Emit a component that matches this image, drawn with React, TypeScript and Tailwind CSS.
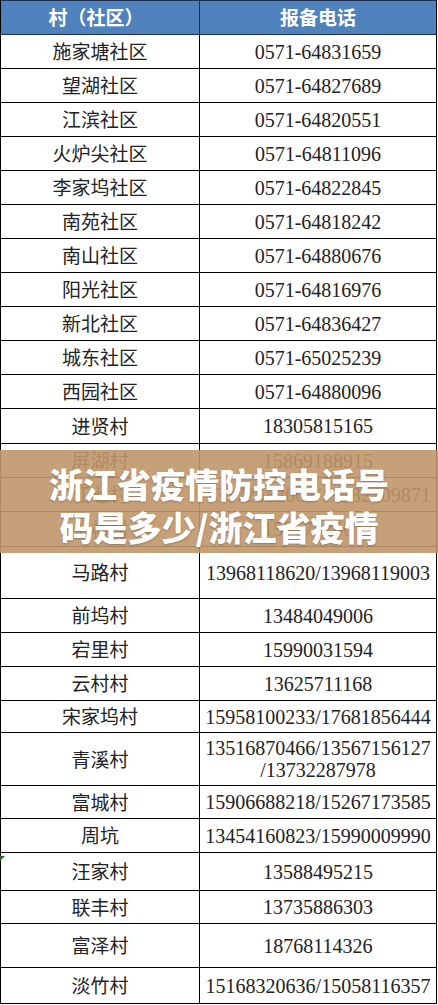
const rows: { name: string; phone: string[]; h: string }[] = [
  { name: "施家塘社区", phone: ["0571-64831659"], h: "h-[34px]" },
  { name: "望湖社区", phone: ["0571-64827689"], h: "h-[34px]" },
  { name: "江滨社区", phone: ["0571-64820551"], h: "h-[34px]" },
  { name: "火炉尖社区", phone: ["0571-64811096"], h: "h-[34px]" },
  { name: "李家坞社区", phone: ["0571-64822845"], h: "h-[34px]" },
  { name: "南苑社区", phone: ["0571-64818242"], h: "h-[34px]" },
  { name: "南山社区", phone: ["0571-64880676"], h: "h-[34px]" },
  { name: "阳光社区", phone: ["0571-64816976"], h: "h-[34px]" },
  { name: "新北社区", phone: ["0571-64836427"], h: "h-[34px]" },
  { name: "城东社区", phone: ["0571-65025239"], h: "h-[34px]" },
  { name: "西园社区", phone: ["0571-64880096"], h: "h-[34px]" },
  { name: "进贤村", phone: ["18305815165"], h: "h-[35px]" },
  { name: "屏湖村", phone: ["15869188915"], h: "h-[34px]" },
  { name: "江七村", phone: ["13372553007/15282109871"], h: "h-[34px]" },
  { name: "上村村", phone: ["15867830013"], h: "h-[35px]" },
  { name: "马路村", phone: ["13968118620/13968119003"], h: "h-[52px]" },
  { name: "前坞村", phone: ["13484049006"], h: "h-[34px]" },
  { name: "宕里村", phone: ["15990031594"], h: "h-[34px]" },
  { name: "云村村", phone: ["13625711168"], h: "h-[34px]" },
  { name: "宋家坞村", phone: ["15958100233/17681856444"], h: "h-[32px]" },
  { name: "青溪村", phone: ["13516870466/13567156127", "/13732287978"], h: "h-[53px]" },
  { name: "富城村", phone: ["15906688218/15267173585"], h: "h-[33px]" },
  { name: "周坑", phone: ["13454160823/15990009990"], h: "h-[34px]" },
  { name: "汪家村", phone: ["13588495215"], h: "h-[38px]" },
  { name: "联丰村", phone: ["13735886303"], h: "h-[33px]" },
  { name: "富泽村", phone: ["18768114326"], h: "h-[44px]" },
  { name: "淡竹村", phone: ["15168320636/15058116357"], h: "h-[36px]" },
];

export default function App() {
  return (
    <div className="relative h-[1005px] w-[438px] overflow-hidden bg-white">
      <div className="w-[437px] border-l border-r border-black">
        {/* header */}
        <div className="flex h-[35px] border-t border-b border-[#1f2f4f] bg-[#4f81bd] font-['Noto_Sans_CJK_SC',sans-serif] text-[19px] font-bold text-white">
          <div className="flex w-[199px] items-center justify-center border-r border-[#1f2f4f] pr-[8px]">
            村（社区）
          </div>
          <div className="flex flex-1 items-center justify-center">报备电话</div>
        </div>

        {rows.map((r) => (
          <div key={r.name} className={`flex border-b border-black ${r.h}`}>
            <div className="flex w-[199px] items-center justify-center border-r border-black font-['Noto_Sans_CJK_SC',sans-serif] text-[19px] text-[#222]">
              {r.name}
            </div>
            <div className="flex flex-1 flex-col items-center justify-center font-['Liberation_Serif','Noto_Sans_CJK_SC',serif] text-[20px] leading-[22px] text-[#222]">
              {r.phone.map((p) => (
                <span key={p}>{p}</span>
              ))}
            </div>
          </div>
        ))}
      </div>

      {/* excel markers */}
      <div className="absolute left-0 top-[476px] h-0 w-0 border-t-[5px] border-r-[5px] border-t-[#5a5a2a] border-r-transparent" />
      <div className="absolute left-0 top-[856px] h-0 w-0 border-t-[5px] border-r-[5px] border-t-[#2f5f2a] border-r-transparent" />

      {/* title banner */}
      <div className="absolute left-0 right-0 top-[450px] flex h-[103px] flex-col items-center bg-[#bf966a]/90 pt-[12px] font-['Noto_Sans_CJK_SC',sans-serif] text-[34px] font-black leading-[43px] text-white [text-shadow:0_1px_2px_rgba(0,0,0,0.25)]">
        <span>浙江省疫情防控电话号</span>
        <span>码是多少/浙江省疫情</span>
      </div>
    </div>
  );
}
